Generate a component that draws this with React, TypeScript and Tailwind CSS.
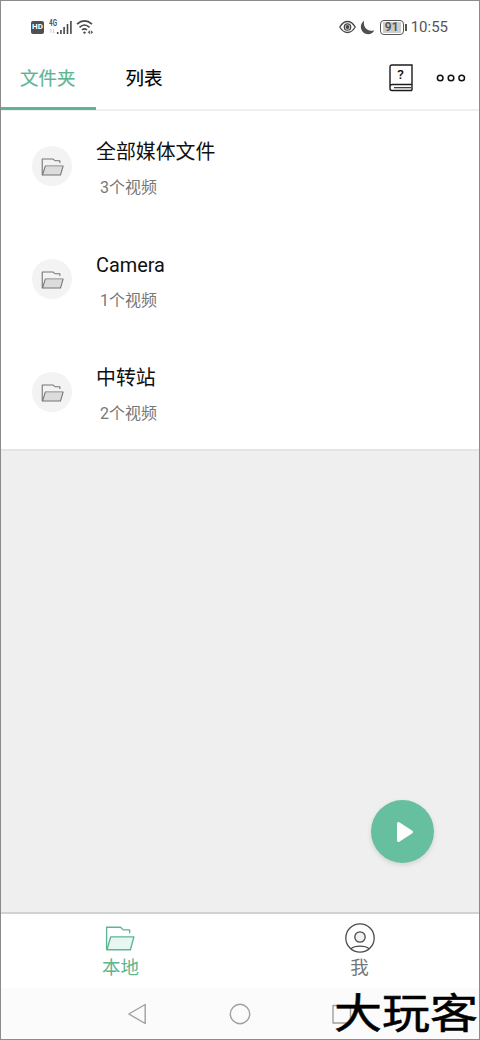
import React from 'react';

const folders = [
  { name: '全部媒体文件', count: '3个视频' },
  { name: 'Camera', count: '1个视频' },
  { name: '中转站', count: '2个视频' },
];

const FolderIcon = ({ className, fill }: { className: string; fill: string }) => (
  <svg viewBox="0 0 28 24" preserveAspectRatio="none" className={className} fill="none" stroke="currentColor" strokeWidth="1.300" strokeLinejoin="round" strokeLinecap="round">
    <path d="M1.500 22.500V1.200H14.500L17 3.700H23V6.400" />
    <path d="M5.300 10.500H27L23.700 22.800H1.800Z" fill={fill} />
  </svg>
);

const StatusBar = () => {
  return (
    <div className="flex h-[52px] items-center justify-between pl-[30px] pr-[31px] text-[#555]">
      <div className="flex items-center">
        <span className="flex h-[13px] w-[13px] items-center justify-center rounded-[2px] bg-[#505050] text-[8px] font-bold leading-none text-white">HD</span>
        <svg width="24" height="16" viewBox="0 0 24 16" className="ml-[5px]" fill="none" stroke="#484848">
          <text x="0" y="7" fontSize="9" fontWeight="700" fill="#555" stroke="none" textLength="8" lengthAdjust="spacingAndGlyphs">4G</text>
          <path d="M2 10v4M1 11l1-1M4.500 10v4M4.500 14l1-1" stroke="#c4c4c4" strokeWidth=".8" />
          <path d="M8.700 13v2M11.900 11v4M15.100 8v7M18.500 5v10M21.900 2v13" strokeWidth="1.600" />
        </svg>
        <svg width="18" height="16" viewBox="0 0 18 16" className="ml-[2.500px]" fill="none" stroke="#484848" strokeWidth="1.600">
          <path d="M1 5.200Q8.500-1.300 16 5.200M3.500 8.300Q8.500 3.700 13.500 8.300M6 11Q8.500 8.800 11 11" />
          <circle cx="8.500" cy="13.600" r="1.200" fill="#484848" stroke="none" />
          <path d="M14 11.200L11.500 13.300 14 15.200zM14.800 11.200L17.300 13.300 14.800 15.200z" fill="#666" stroke="none" />
        </svg>
      </div>
      <div className="flex items-center">
        <svg width="17" height="14" viewBox="0 0 17 14" fill="none" stroke="#484848" strokeWidth="1.300">
          <path d="M.8 7Q4 1.500 8.500 1.500T16.200 7Q13 12.500 8.500 12.500T.8 7Z" />
          <circle cx="8.500" cy="7" r="3.200" />
          <circle cx="8.500" cy="7" r="2" fill="#484848" stroke="none" />
        </svg>
        <svg width="15" height="15" viewBox="0 0 15 15" className="ml-[4px]" fill="#505050">
          <path d="M4.200.7C-.1 3.200-.2 9.500 3.400 12.500 7 15.500 12.500 14.400 14.300 10.200 10.500 11.500 6.800 10.300 5.100 7.500 3.800 5.400 3.600 2.800 4.200.7Z" />
        </svg>
        <span className="ml-[5px] flex h-[15px] w-[24px] items-center justify-center rounded-[4px] border-[1.500px] border-[#555] p-px">
          <span className="flex h-[11px] w-[18px] items-center justify-center rounded-[1px] bg-[#ccc] text-[12px] font-semibold leading-none">91</span>
        </span>
        <span className="ml-[1px] h-[7px] w-[2px] bg-[#555]" />
        <span className="ml-[4px] text-[15px] leading-5">10:55</span>
      </div>
    </div>
  );
};

const Header = () => {
  return (
    <div className="flex h-[58px] justify-between border-b-2 border-[#efefef] text-[18.500px] leading-[26px]">
      <div className="flex h-[57px]">
        <div className="h-[57px] w-[95px] border-b-[3px] border-[#5eb594] pl-[19px] pt-[13px] text-[#5eb594] [-webkit-text-stroke:0.2px]">文件夹</div>
        <div className="pl-[29.500px] pt-[13px] text-black [-webkit-text-stroke:0.2px]">列表</div>
      </div>
      <div className="flex items-start pr-[13px] pt-[11px]">
        <svg width="24" height="28" viewBox="0 0 24 28" fill="none" stroke="#1c1c1c" strokeWidth="1.400">
          <path d="M23 20.500V1H3Q1 1 1 3V24.500Q1 26.500 3 26.500H23M23 20.500H3.500Q1 20.500 1 23M23 20.500V26.500" />
          <path d="M5 23.700H22" strokeWidth="1.100" />
          <text x="11.500" y="15" textAnchor="middle" fontSize="13.500" fontWeight="500" fill="#111" stroke="none">?</text>
        </svg>
        <svg width="30" height="10" viewBox="0 0 30 10" className="ml-[23.500px] mt-[9px]" fill="none" stroke="#111" strokeWidth="1.500">
          <circle cx="4.200" cy="5" r="2.800" />
          <circle cx="15" cy="5" r="2.800" />
          <circle cx="25.700" cy="5" r="2.800" />
        </svg>
      </div>
    </div>
  );
};

const App = () => {
  return (
    <div className="relative flex h-[1040px] w-[480px] flex-col overflow-hidden border border-[#8b8b8b] bg-white font-['Roboto','Noto_Sans_CJK_SC',sans-serif]">
      <StatusBar />
      <Header />
      <div className="-mt-px border-b-2 border-[#e4e4e4]">
        {folders.map((folder) => (
          <div key={folder.name} className="flex h-[113px] items-center pl-[31px]">
            <div className="-mt-px flex h-10 w-10 items-center justify-center rounded-full bg-[#f3f3f3] pl-px pt-px text-[#747474]">
              <FolderIcon className="h-[18px] w-[23px]" fill="#dcdcdc" />
            </div>
            <div className="ml-6 mt-[4px] flex flex-col">
              <span className="text-[19.900px] leading-[30px] text-[#101010]">{folder.name}</span>
              <span className="ml-[4px] mt-[8px] text-[16px] leading-6 text-[#777]">{folder.count}</span>
            </div>
          </div>
        ))}
      </div>
      <div className="flex flex-1 items-end justify-end bg-[#efefef] pb-[49px] pr-[45px]">
        <button className="flex h-[63px] w-[63px] items-center justify-center rounded-full bg-[#66bf9f] shadow-[0_2px_5px_rgba(0,0,0,0.12)]">
          <svg width="18" height="22" viewBox="0 0 18 22" className="ml-[5px]" fill="white" stroke="white" strokeWidth="3" strokeLinejoin="round">
            <path d="M2.500 2.500L15.500 11 2.500 19.500Z" />
          </svg>
        </button>
      </div>
      <div className="flex h-[76px] border-t-2 border-[#d2d2d2] text-[18.500px] leading-[26px]">
        <div className="flex flex-1 flex-col items-center pt-[12px] text-[#5eb594]">
          <FolderIcon className="-ml-px h-[25px] w-[30px]" fill="#e9f7f2" />
          <span className="mt-[4px]">本地</span>
        </div>
        <div className="flex flex-1 flex-col items-center pt-[9px] text-[#777]">
          <svg width="30" height="30" viewBox="0 0 30 30" fill="none" stroke="#4a4a4a" strokeWidth="1.300">
            <circle cx="15" cy="15" r="14.200" />
            <circle cx="15" cy="14" r="5.200" fill="#f1f1f1" />
            <path d="M6 25.800Q9 23.200 15 23.200T24 25.800" />
          </svg>
          <span className="mt-[2px]">我</span>
        </div>
      </div>
      <div className="flex h-[51px] items-center bg-[#fbfbfb] pl-[127px]">
        <svg width="226" height="24" viewBox="0 0 226 24" fill="none" stroke="#a0a0a0" strokeWidth="1.400" strokeLinejoin="round">
          <path d="M17.200 2.500V21.500L.8 12Z" />
          <circle cx="112" cy="12" r="9.700" />
          <rect x="205" y="3.500" width="17.500" height="17.500" />
        </svg>
      </div>
      <span className="absolute bottom-[-3px] right-[1px] scale-y-[0.86] whitespace-nowrap text-[48px] font-normal leading-[56px] text-black [-webkit-text-stroke:0.6px]">大玩客</span>
    </div>
  );
};

export default App;
